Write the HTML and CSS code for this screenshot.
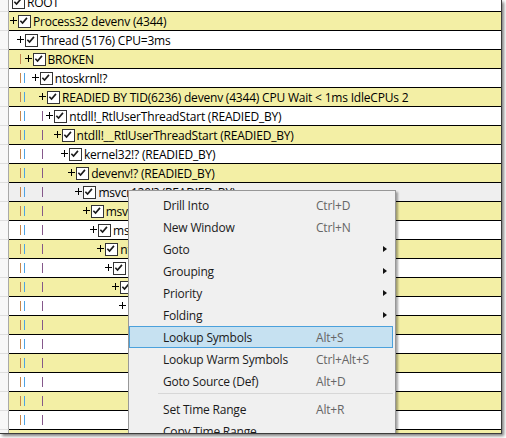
FILE: index.html
```html
<!DOCTYPE html>
<html>
<head>
<meta charset="utf-8">
<link rel="stylesheet" href="styles.css">
</head>
<body>
<div class="shot">
  <div class="win">
    <div class="tree">
      <div class="row w root"><span class="hdr"></span><span class="cell"><span class="cb"><svg viewBox="0 0 13 13"><path d="M2.6 6.6 L5.2 9.4 L10.4 3.2"/></svg></span><span class="label">ROOT</span></span></div>
      <div class="row y" style="--d:1"><span class="hdr"></span><span class="cell"><span class="plus"></span><span class="cb"><svg viewBox="0 0 13 13"><path d="M2.6 6.6 L5.2 9.4 L10.4 3.2"/></svg></span><span class="label">Process32 devenv (4344)</span></span></div>
      <div class="row w" style="--d:2"><span class="hdr"></span><span class="cell"><span class="plus"></span><span class="cb"><svg viewBox="0 0 13 13"><path d="M2.6 6.6 L5.2 9.4 L10.4 3.2"/></svg></span><span class="label">Thread (5176) CPU=3ms</span></span></div>
      <div class="row y g1" style="--d:3"><span class="hdr"></span><span class="cell"><span class="plus"></span><span class="cb"><svg viewBox="0 0 13 13"><path d="M2.6 6.6 L5.2 9.4 L10.4 3.2"/></svg></span><span class="label">BROKEN</span></span></div>
      <div class="row w g2" style="--d:4"><span class="hdr"></span><span class="cell"><span class="plus"></span><span class="cb"><svg viewBox="0 0 13 13"><path d="M2.6 6.6 L5.2 9.4 L10.4 3.2"/></svg></span><span class="label">ntoskrnl!?</span></span></div>
      <div class="row y g2" style="--d:5"><span class="hdr"></span><span class="cell"><span class="plus"></span><span class="cb"><svg viewBox="0 0 13 13"><path d="M2.6 6.6 L5.2 9.4 L10.4 3.2"/></svg></span><span class="label">READIED BY TID(6236) devenv (4344) CPU Wait &lt; 1ms IdleCPUs 2</span></span></div>
      <div class="row w g3" style="--d:6"><span class="hdr"></span><span class="cell"><span class="plus"></span><span class="cb"><svg viewBox="0 0 13 13"><path d="M2.6 6.6 L5.2 9.4 L10.4 3.2"/></svg></span><span class="label">ntdll!_RtlUserThreadStart (READIED_BY)</span></span></div>
      <div class="row y g3" style="--d:7"><span class="hdr"></span><span class="cell"><span class="plus"></span><span class="cb"><svg viewBox="0 0 13 13"><path d="M2.6 6.6 L5.2 9.4 L10.4 3.2"/></svg></span><span class="label">ntdll!__RtlUserThreadStart (READIED_BY)</span></span></div>
      <div class="row w g3" style="--d:8"><span class="hdr"></span><span class="cell"><span class="plus"></span><span class="cb"><svg viewBox="0 0 13 13"><path d="M2.6 6.6 L5.2 9.4 L10.4 3.2"/></svg></span><span class="label">kernel32!? (READIED_BY)</span></span></div>
      <div class="row y g3" style="--d:9"><span class="hdr"></span><span class="cell"><span class="plus"></span><span class="cb"><svg viewBox="0 0 13 13"><path d="M2.6 6.6 L5.2 9.4 L10.4 3.2"/></svg></span><span class="label">devenv!? (READIED_BY)</span></span></div>
      <div class="row s g3" style="--d:10"><span class="hdr"></span><span class="cell"><span class="plus"></span><span class="cb"><svg viewBox="0 0 13 13"><path d="M2.6 6.6 L5.2 9.4 L10.4 3.2"/></svg></span><span class="label">msvcr120!? (READIED_BY)</span></span></div>
      <div class="row y g3" style="--d:11"><span class="hdr"></span><span class="cell"><span class="plus"></span><span class="cb"><svg viewBox="0 0 13 13"><path d="M2.6 6.6 L5.2 9.4 L10.4 3.2"/></svg></span><span class="label">msvcr120!?</span></span></div>
      <div class="row w g3" style="--d:12"><span class="hdr"></span><span class="cell"><span class="plus"></span><span class="cb"><svg viewBox="0 0 13 13"><path d="M2.6 6.6 L5.2 9.4 L10.4 3.2"/></svg></span><span class="label">msvcr120!?</span></span></div>
      <div class="row y g3" style="--d:13"><span class="hdr"></span><span class="cell"><span class="plus"></span><span class="cb"><svg viewBox="0 0 13 13"><path d="M2.6 6.6 L5.2 9.4 L10.4 3.2"/></svg></span><span class="label">ntdll!?</span></span></div>
      <div class="row w g3" style="--d:14"><span class="hdr"></span><span class="cell"><span class="plus"></span><span class="cb"><svg viewBox="0 0 13 13"><path d="M2.6 6.6 L5.2 9.4 L10.4 3.2"/></svg></span></span></div>
      <div class="row y g3" style="--d:15"><span class="hdr"></span><span class="cell"><span class="plus"></span><span class="cb"><svg viewBox="0 0 13 13"><path d="M2.6 6.6 L5.2 9.4 L10.4 3.2"/></svg></span></span></div>
      <div class="row w g3" style="--d:16"><span class="hdr"></span><span class="cell"><span class="plus"></span></span></div>
      <div class="row y g3"><span class="hdr"></span><span class="cell"></span></div>
      <div class="row w g3"><span class="hdr"></span><span class="cell"></span></div>
      <div class="row y g3"><span class="hdr"></span><span class="cell"></span></div>
      <div class="row w g3"><span class="hdr"></span><span class="cell"></span></div>
      <div class="row y g3"><span class="hdr"></span><span class="cell"></span></div>
      <div class="row w g3"><span class="hdr"></span><span class="cell"></span></div>
      <div class="row y g3"><span class="hdr"></span><span class="cell"></span></div>
    </div>

    <div class="menu">
      <div class="mi"><span class="t">Drill Into</span><span class="k">Ctrl+D</span><span class="a"></span></div>
      <div class="mi"><span class="t">New Window</span><span class="k">Ctrl+N</span><span class="a"></span></div>
      <div class="mi"><span class="t">Goto</span><span class="k"></span><span class="a sub"></span></div>
      <div class="mi"><span class="t">Grouping</span><span class="k"></span><span class="a sub"></span></div>
      <div class="mi"><span class="t">Priority</span><span class="k"></span><span class="a sub"></span></div>
      <div class="mi"><span class="t">Folding</span><span class="k"></span><span class="a sub"></span></div>
      <div class="mi hot"><span class="t">Lookup Symbols</span><span class="k">Alt+S</span><span class="a"></span></div>
      <div class="mi"><span class="t">Lookup Warm Symbols</span><span class="k">Ctrl+Alt+S</span><span class="a"></span></div>
      <div class="mi"><span class="t">Goto Source (Def)</span><span class="k">Alt+D</span><span class="a"></span></div>
      <div class="sep"></div>
      <div class="mi"><span class="t">Set Time Range</span><span class="k">Alt+R</span><span class="a"></span></div>
      <div class="mi"><span class="t">Copy Time Range</span><span class="k"></span><span class="a"></span></div>
    </div>
  </div>
</div>
</body>
</html>
```

FILE: styles.css
```css
html, body {
  margin: 0;
  padding: 0;
  background: #ffffff;
}

.shot {
  width: 506px;
  height: 438px;
  overflow: hidden;
  background: #ffffff;
}

.win {
  position: relative;
  width: 501px;
  height: 433px;
  overflow: hidden;
  border-right: 1px solid #3c3c3c;
  border-bottom: 1px solid #3c3c3c;
  box-shadow: 2px 2px 3px rgba(0, 0, 0, 0.5);
  background: #ffffff;
  font-family: "Open Sans", "Noto Sans", sans-serif;
  font-size: 12px;
  letter-spacing: -0.2px;
  color: #000;
}

.tree {
  margin-top: -7px;
}

.row {
  display: flex;
  height: 19px;
}

.hdr {
  flex: none;
  width: 8px;
  background: #f7f7f7;
  border-right: 1px solid #a9a9a9;
  border-bottom: 1px solid #dedede;
}

.cell {
  flex: 1;
  min-width: 0;
  display: flex;
  align-items: center;
  white-space: nowrap;
  overflow: hidden;
  border-bottom: 1px solid #000;
  padding-left: calc(1px + (var(--d, 1) - 1) * 7.27px);
  background-repeat: no-repeat;
}

.root .cell {
  padding-left: 3px;
}

.y .cell { background-color: #f3efa5; }
.w .cell { background-color: #ffffff; }
.s .cell { background-color: #efefef; }

.g1 .cell {
  background-image: linear-gradient(#c4874e, #c4874e);
  background-size: 1px 10px;
  background-position: 11px 4px;
}

.g2 .cell {
  background-image:
    linear-gradient(#c4874e, #c4874e),
    linear-gradient(#4ea3e4, #4ea3e4);
  background-size: 1px 10px, 1px 10px;
  background-position: 11px 4px, 15px 4px;
}

.g3 .cell {
  background-image:
    linear-gradient(#c4874e, #c4874e),
    linear-gradient(#4ea3e4, #4ea3e4),
    linear-gradient(#85588a, #85588a);
  background-size: 1px 10px, 1px 10px, 1px 10px;
  background-position: 11px 4px, 15px 4px, 33px 4px;
}

.plus {
  flex: none;
  width: 7px;
  height: 7px;
  margin-right: 1px;
  margin-top: -2px;
  background:
    linear-gradient(#000, #000) center / 7px 1px no-repeat,
    linear-gradient(#000, #000) center / 1px 7px no-repeat;
}

.cb {
  flex: none;
  width: 13px;
  height: 13px;
  box-sizing: border-box;
  border: 1px solid #333;
  background: #fff;
  display: flex;
}

.cb svg {
  width: 11px;
  height: 11px;
}

.cb path {
  fill: none;
  stroke: #1a1a1a;
  stroke-width: 1.9;
  transform: translate(-1px, -1px);
}

.label {
  margin-left: 2px;
  line-height: 18px;
  padding-top: 1px;
}

/* context menu (overlay) */
.menu {
  position: absolute;
  left: 128px;
  top: 190px;
  width: 266px;
  padding-top: 3px;
  background: #f0f0f0;
  border: 1px solid #979797;
  box-shadow: 2px 2px 2px rgba(0, 0, 0, 0.35);
  color: #1a1a1a;
}

.mi {
  display: grid;
  grid-template-columns: 153px 1fr 9px;
  align-items: center;
  height: 22px;
  box-sizing: border-box;
  margin-right: 2px;
  padding-left: 33px;
  border: 1px solid transparent;
}

.mi.hot {
  background: #c6e1f1;
  border-color: #4ba1dc;
}

.k {
  color: #666;
}

.a.sub {
  width: 0;
  height: 0;
  border-left: 4px solid #111;
  border-top: 3.5px solid transparent;
  border-bottom: 3.5px solid transparent;
}

.sep {
  height: 5px;
  margin-left: 29px;
  margin-right: 2px;
  border-top: 1px solid #d7d7d7;
  box-sizing: border-box;
  margin-top: 1px;
}
```
